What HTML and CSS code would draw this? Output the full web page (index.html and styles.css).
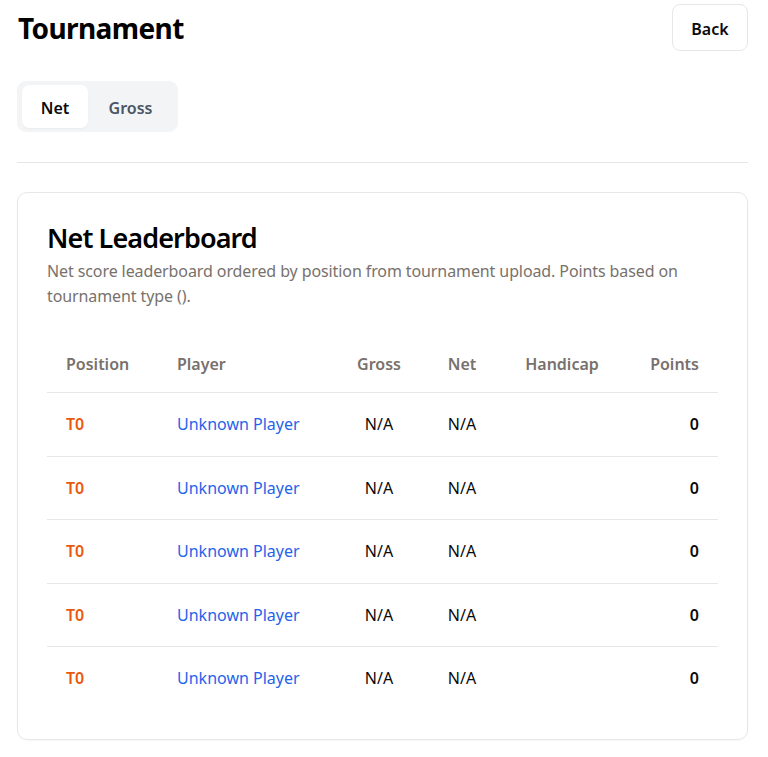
FILE: index.html
```html
<!DOCTYPE html>
<html lang="en">
<head>
<meta charset="utf-8">
<title>Tournament</title>
<link rel="stylesheet" href="styles.css">
</head>
<body>
<div class="page">
  <header class="top">
    <h1 class="title">Tournament</h1>
    <button class="back">Back</button>
  </header>

  <div class="tabs">
    <button class="tab active">Net</button>
    <button class="tab">Gross</button>
  </div>

  <hr class="divider">

  <section class="card">
    <h2 class="card-title">Net Leaderboard</h2>
    <p class="card-desc">Net score leaderboard ordered by position from tournament upload. Points based on tournament type ().</p>

    <table class="board">
      <colgroup>
        <col class="c-pos"><col class="c-player"><col class="c-gross"><col class="c-net"><col class="c-hcp"><col class="c-pts">
      </colgroup>
      <thead>
        <tr>
          <th class="left">Position</th>
          <th class="left">Player</th>
          <th class="center">Gross</th>
          <th class="center">Net</th>
          <th class="center">Handicap</th>
          <th class="right">Points</th>
        </tr>
      </thead>
      <tbody>
        <tr><td class="pos">T0</td><td><a class="player" href="#">Unknown Player</a></td><td class="center">N/A</td><td class="center">N/A</td><td class="center"></td><td class="right pts">0</td></tr>
        <tr><td class="pos">T0</td><td><a class="player" href="#">Unknown Player</a></td><td class="center">N/A</td><td class="center">N/A</td><td class="center"></td><td class="right pts">0</td></tr>
        <tr><td class="pos">T0</td><td><a class="player" href="#">Unknown Player</a></td><td class="center">N/A</td><td class="center">N/A</td><td class="center"></td><td class="right pts">0</td></tr>
        <tr><td class="pos">T0</td><td><a class="player" href="#">Unknown Player</a></td><td class="center">N/A</td><td class="center">N/A</td><td class="center"></td><td class="right pts">0</td></tr>
        <tr><td class="pos">T0</td><td><a class="player" href="#">Unknown Player</a></td><td class="center">N/A</td><td class="center">N/A</td><td class="center"></td><td class="right pts">0</td></tr>
      </tbody>
    </table>
  </section>
</div>
</body>
</html>
```

FILE: styles.css
```css
* { box-sizing: border-box; }

html, body {
  margin: 0;
  padding: 0;
  background: #ffffff;
}

body {
  font-family: "Noto Sans", "Open Sans", "Liberation Sans", sans-serif;
  color: #0c0a09;
  font-size: 16px;
}

.page {
  padding: 4px 20px 30px 17px;
  display: flex;
  flex-direction: column;
}

.top {
  display: flex;
  align-items: center;
  justify-content: space-between;
}

.title {
  margin: 0 0 0 1px;
  font-size: 28px;
  line-height: 36px;
  font-weight: 700;
  letter-spacing: -0.6px;
  color: #000;
}

.back {
  font-family: inherit;
  font-size: 16px;
  font-weight: 600;
  line-height: 24px;
  color: #0c0a09;
  background: #fff;
  border: 1px solid #e5e7eb;
  border-radius: 8px;
  padding: 12px 0 11px;
  height: 47px;
  width: 76px;
}

.tabs {
  margin-top: 30px;
  align-self: flex-start;
  display: flex;
  background: #f3f4f6;
  border-radius: 9px;
  padding: 4px 5px;
}

.tab {
  font-family: inherit;
  font-size: 16px;
  font-weight: 600;
  line-height: 24px;
  height: 43px;
  width: 85px;
  padding: 2px 0 0;
  border: 0;
  border-radius: 7px;
  background: transparent;
  color: #4b5563;
  text-align: center;
}

.tab.active {
  background: #fff;
  color: #0c0a09;
  box-shadow: 0 1px 2px rgba(0, 0, 0, 0.04);
  width: 66px;
}

.divider {
  margin: 30px 0 0;
  border: 0;
  border-top: 1px solid #e5e7eb;
}

.card {
  margin-top: 29px;
  border: 1px solid #e5e7eb;
  border-radius: 10px;
  padding: 27px 29px 29px;
  box-shadow: 0 1px 2px rgba(0, 0, 0, 0.03);
}

.card-title {
  margin: 0;
  font-size: 27px;
  line-height: 36px;
  font-weight: 600;
  color: #000;
  letter-spacing: -0.9px;
}

.card-desc {
  margin: 3px 0 0;
  font-size: 16px;
  line-height: 25px;
  color: #78716c;
  letter-spacing: -0.1px;
}

.board {
  margin-top: 27px;
  width: 100%;
  border-collapse: collapse;
  table-layout: fixed;
}

.c-pos { width: 111px; }
.c-player { width: 177px; }
.c-gross { width: 88px; }
.c-net { width: 78px; }
.c-hcp { width: 122px; }
.c-pts { width: 95px; }

.board th {
  font-weight: 600;
  color: #78716c;
  font-size: 16px;
  line-height: 24px;
  padding: 16px 19px;
  border-bottom: 1px solid #e5e7eb;
  white-space: nowrap;
}

.board td {
  font-size: 16px;
  line-height: 24px;
  padding: 19.25px 19px;
  border-bottom: 1px solid #e5e7eb;
  white-space: nowrap;
  color: #0c0a09;
}

.board tbody tr:last-child td { border-bottom: 0; }

.left { text-align: left; }
.center { text-align: center; }
.right { text-align: right; }

.pos {
  color: #ea580c !important;
  font-weight: 600;
}

.player {
  color: #2563eb;
  text-decoration: none;
}

.pts { font-weight: 600; }
```
